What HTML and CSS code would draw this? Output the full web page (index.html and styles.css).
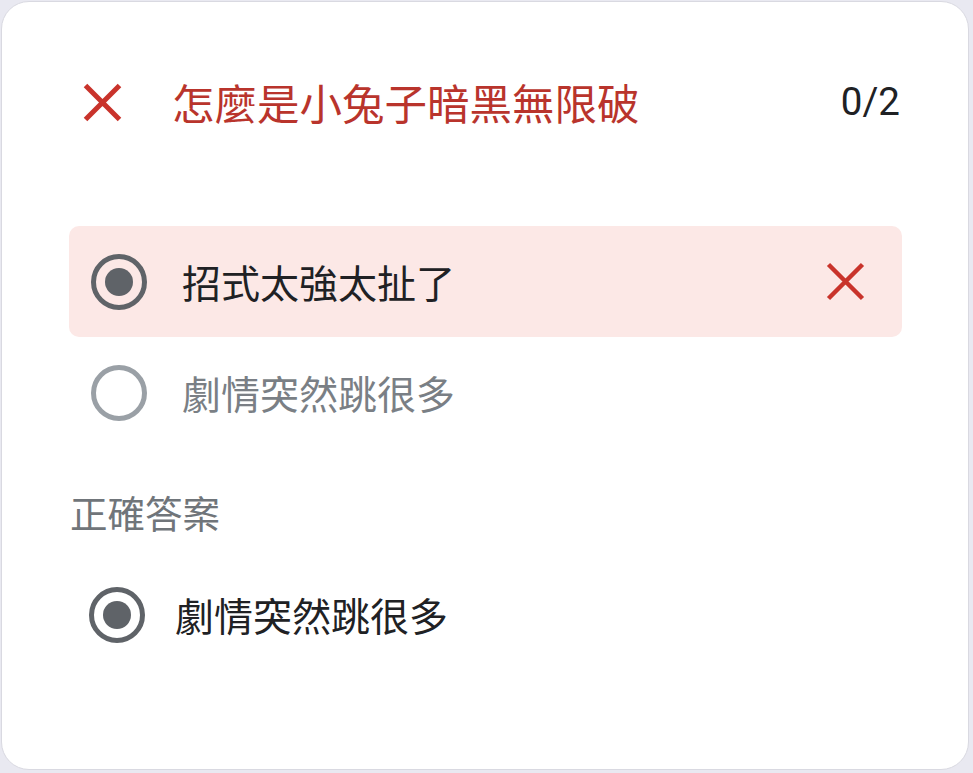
FILE: index.html
```html
<!DOCTYPE html>
<html lang="zh-Hant">
<head>
<meta charset="utf-8">
<title>Quiz result</title>
<link rel="stylesheet" href="styles.css">
</head>
<body>
<div class="card">
  <div class="header">
    <svg class="x-icon" width="39" height="39" viewBox="0 0 39 39"><path d="M2.5 2.5 L36.5 36.5 M36.5 2.5 L2.5 36.5" stroke="#c9332b" stroke-width="5" fill="none"/></svg>
    <div class="title">怎麼是小兔子暗黑無限破</div>
    <div class="score">0/2</div>
  </div>
  <div class="option wrong">
    <svg class="radio" width="56" height="56" viewBox="0 0 56 56"><circle cx="28" cy="28" r="25.5" stroke="#5f6368" stroke-width="5" fill="none"/><circle cx="28" cy="28" r="14" fill="#5f6368"/></svg>
    <div class="opt-text">招式太強太扯了</div>
    <svg class="x-icon mark" width="39" height="39" viewBox="0 0 39 39"><path d="M2.5 2.5 L36.5 36.5 M36.5 2.5 L2.5 36.5" stroke="#c9332b" stroke-width="4.5" fill="none"/></svg>
  </div>
  <div class="option muted">
    <svg class="radio" width="56" height="56" viewBox="0 0 56 56"><circle cx="28" cy="28" r="25.5" stroke="#9aa0a6" stroke-width="5" fill="none"/></svg>
    <div class="opt-text">劇情突然跳很多</div>
  </div>
  <div class="label">正確答案</div>
  <div class="option answer">
    <svg class="radio" width="56" height="56" viewBox="0 0 56 56"><circle cx="28" cy="28" r="25.5" stroke="#5f6368" stroke-width="5" fill="none"/><circle cx="28" cy="28" r="14" fill="#5f6368"/></svg>
    <div class="opt-text">劇情突然跳很多</div>
  </div>
</div>
</body>
</html>
```

FILE: styles.css
```css
html, body {
  margin: 0;
  padding: 0;
}
body {
  background: #e9e9f1;
  width: 973px;
  height: 773px;
  overflow: hidden;
  font-family: "Noto Sans CJK TC", "Noto Sans", Roboto, sans-serif;
}
.card {
  margin: 1px;
  width: 968px;
  height: 769px;
  box-sizing: border-box;
  border: 1px solid #d9d9e1;
  border-radius: 28px;
  background: #fff;
  padding: 50px 66px 0 67px;
}
.header {
  display: flex;
  align-items: center;
  height: 100px;
}
.header .x-icon {
  margin-left: 14px;
  flex: none;
}
.title {
  margin-left: 50px;
  font-size: 42.5px;
  line-height: 1;
  color: #b9342c;
  flex: 1;
}
.score {
  font-family: Roboto, "Noto Sans", sans-serif;
  font-size: 38.5px;
  color: #202124;
  margin-right: 2px;
  line-height: 1;
}
.option {
  display: flex;
  align-items: center;
  height: 111px;
  border-radius: 10px;
  padding: 0 37px 0 22px;
}
.option .radio {
  flex: none;
}
.opt-text {
  font-size: 39px;
  line-height: 1;
  margin-left: 35px;
  color: #202124;
  flex: 1;
}
.wrong {
  margin-top: 74px;
  background: #fce8e6;
}
.muted .opt-text {
  color: #7a7f85;
}
.label {
  margin-top: 41px;
  height: 46px;
  line-height: 46px;
  font-size: 37.5px;
  color: #70757a;
  padding-left: 1px;
}
.answer {
  margin-top: 24px;
  padding-left: 20px;
}
.answer .opt-text {
  margin-left: 30px;
}
```
